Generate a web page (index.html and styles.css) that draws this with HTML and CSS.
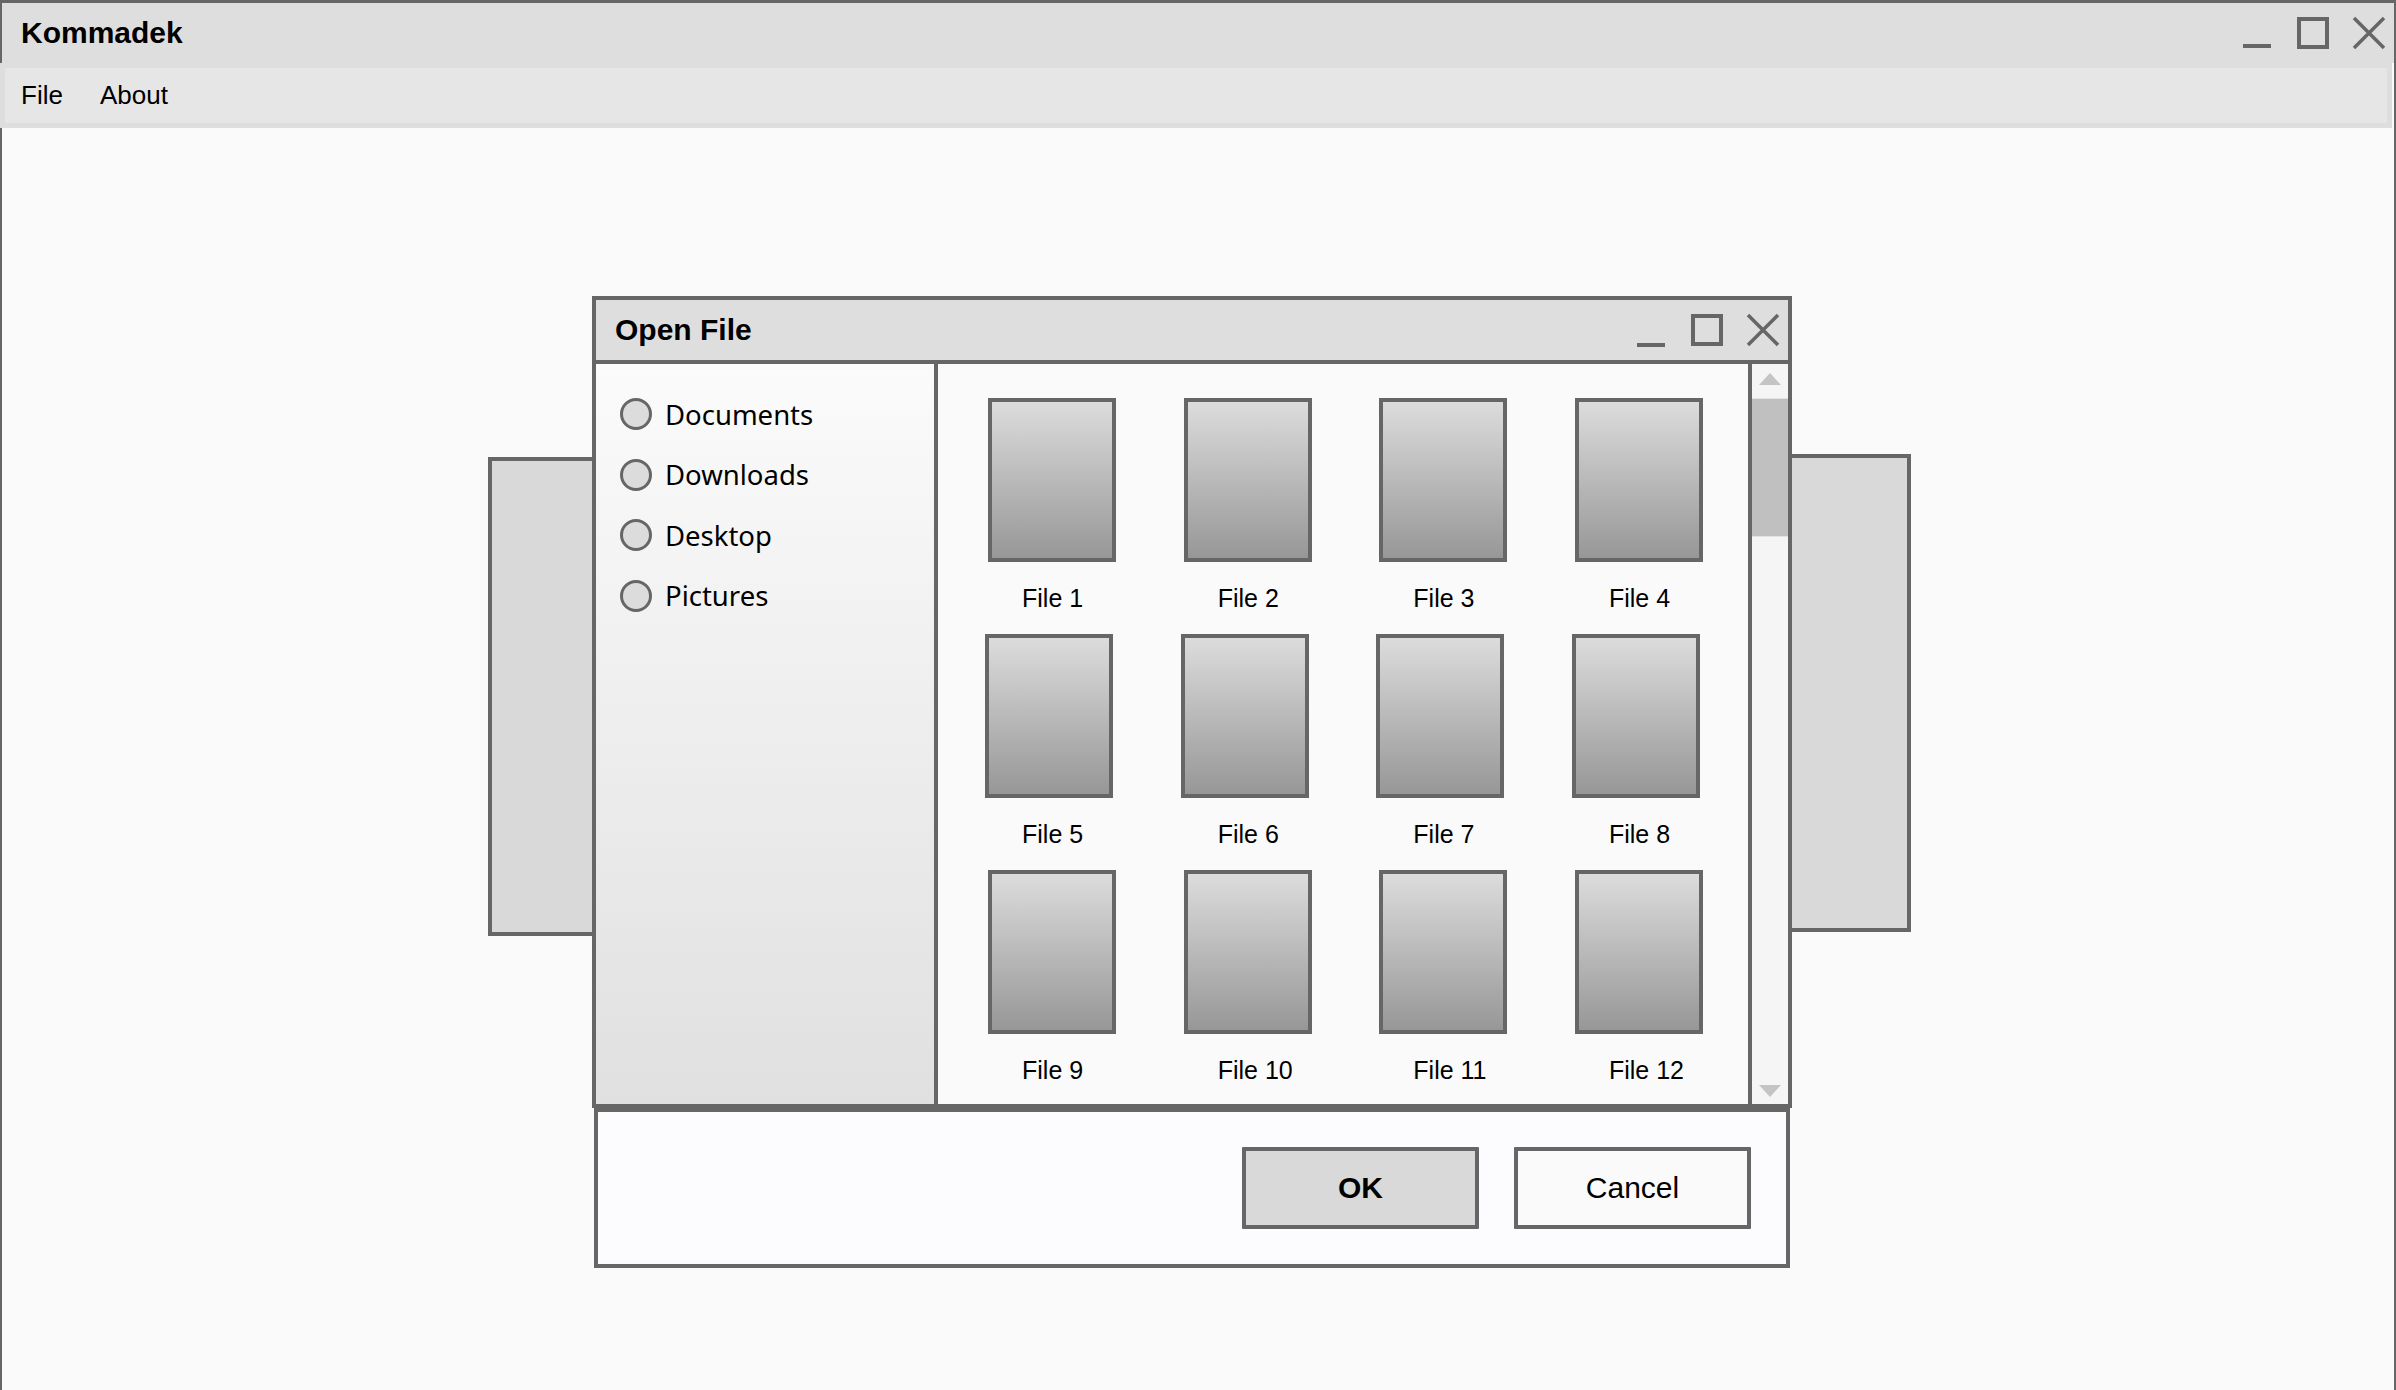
FILE: index.html
```html
<!DOCTYPE html>
<html lang="en">
<head>
<meta charset="utf-8">
<title>Kommadek</title>
<link rel="stylesheet" href="styles.css">
</head>
<body>
<div class="window">
  <div class="titlebar">
    <span class="app-title">Kommadek</span>
    <svg class="controls" width="144" height="36" viewBox="0 0 144 36">
      <rect x="0" y="29" width="28" height="4" fill="#666"/>
      <rect x="56" y="4" width="28" height="28" fill="none" stroke="#666" stroke-width="4"/>
      <path d="M111 3 L141 33 M141 3 L111 33" stroke="#666" stroke-width="3.5" fill="none"/>
    </svg>
  </div>
  <div class="menubar">
    <span class="menu-item">File</span>
    <span class="menu-item">About</span>
  </div>
  <div class="desktop">
    <div class="side-panel side-left"></div>
    <div class="side-panel side-right"></div>
    <div class="dialog">
      <div class="dialog-window">
        <div class="dialog-titlebar">
          <span class="dialog-title">Open File</span>
          <svg class="controls" width="144" height="36" viewBox="0 0 144 36">
            <rect x="0" y="31" width="28" height="4" fill="#666"/>
            <rect x="56" y="4" width="28" height="28" fill="none" stroke="#666" stroke-width="4"/>
            <path d="M111 3 L141 33 M141 3 L111 33" stroke="#666" stroke-width="3.5" fill="none"/>
          </svg>
        </div>
        <div class="dialog-body">
          <div class="sidebar">
            <div class="place"><span class="radio"></span>Documents</div>
            <div class="place"><span class="radio"></span>Downloads</div>
            <div class="place"><span class="radio"></span>Desktop</div>
            <div class="place"><span class="radio"></span>Pictures</div>
          </div>
          <div class="files">
            <div class="file"><div class="file-icon"></div><div class="file-name">File 1</div></div>
            <div class="file"><div class="file-icon"></div><div class="file-name">File 2</div></div>
            <div class="file"><div class="file-icon"></div><div class="file-name">File 3</div></div>
            <div class="file"><div class="file-icon"></div><div class="file-name">File 4</div></div>
            <div class="file row2"><div class="file-icon"></div><div class="file-name">File 5</div></div>
            <div class="file row2"><div class="file-icon"></div><div class="file-name">File 6</div></div>
            <div class="file row2"><div class="file-icon"></div><div class="file-name">File 7</div></div>
            <div class="file row2"><div class="file-icon"></div><div class="file-name">File 8</div></div>
            <div class="file"><div class="file-icon"></div><div class="file-name">File 9</div></div>
            <div class="file"><div class="file-icon"></div><div class="file-name">File 10</div></div>
            <div class="file"><div class="file-icon"></div><div class="file-name">File 11</div></div>
            <div class="file"><div class="file-icon"></div><div class="file-name">File 12</div></div>
          </div>
          <div class="scrollbar">
            <div class="scroll-btn scroll-up"><span class="arrow-up"></span></div>
            <div class="track"><div class="thumb"></div></div>
            <div class="scroll-btn scroll-down"><span class="arrow-down"></span></div>
          </div>
        </div>
      </div>
      <div class="dialog-actions">
        <button class="btn btn-ok">OK</button>
        <button class="btn">Cancel</button>
      </div>
    </div>
  </div>
</div>
</body>
</html>
```

FILE: styles.css
```css
html, body {
  margin: 0;
  padding: 0;
  background: #fafafa;
  overflow: hidden;
}

body {
  font-family: "Liberation Sans", Arial, sans-serif;
  color: #000;
}

.window {
  width: 2396px;
  height: 1390px;
  box-sizing: border-box;
  border-style: solid;
  border-color: #666;
  border-width: 3px 2px 0 2px;
  background: #fafafa;
  display: flex;
  flex-direction: column;
}

.titlebar {
  height: 60px;
  flex: none;
  background: #dedede;
  display: flex;
  align-items: center;
  justify-content: space-between;
  padding: 0 7px 0 19px;
}

.app-title {
  font-weight: bold;
  font-size: 30px;
}

.controls {
  display: block;
  flex: none;
}

.menubar {
  flex: none;
  height: 65px;
  box-sizing: border-box;
  margin: 0 2px 0 -2px;
  border: 5px solid #dedede;
  background: #e6e6e6;
  display: flex;
  align-items: center;
  padding-left: 16px;
  gap: 37px;
  font-size: 26px;
}

.desktop {
  flex: 1;
  position: relative;
}

.side-panel {
  position: absolute;
  box-sizing: border-box;
  background: #d9d9d9;
  border: 4px solid #666;
}

.side-left {
  left: 486px;
  top: 329px;
  width: 130px;
  height: 479px;
}

.side-right {
  left: 1770px;
  top: 326px;
  width: 139px;
  height: 478px;
}

.dialog {
  position: absolute;
  left: 590px;
  top: 168px;
  width: 1200px;
  display: flex;
  flex-direction: column;
}

.dialog-window {
  border: 4px solid #666;
  background: #fafafa;
}

.dialog-titlebar {
  height: 60px;
  background: #dedede;
  border-bottom: 4px solid #666;
  display: flex;
  align-items: center;
  justify-content: space-between;
  padding: 0 7px 0 19px;
}

.dialog-title {
  font-weight: bold;
  font-size: 30px;
}

.dialog-body {
  display: flex;
  height: 740px;
}

.sidebar {
  width: 342px;
  flex: none;
  box-sizing: border-box;
  border-right: 4px solid #666;
  background: linear-gradient(#fbfbfc, #e0e0e0);
  padding: 20px 0 0 24px;
}

.place {
  height: 60.5px;
  display: flex;
  align-items: center;
  font-family: "Noto Sans", "Open Sans", sans-serif;
  font-size: 27.5px;
}

.radio {
  width: 32px;
  height: 32px;
  box-sizing: border-box;
  border-radius: 50%;
  border: 3.5px solid #666;
  background: #dcdcdc;
  margin-right: 13px;
  flex: none;
}

.files {
  width: 810px;
  flex: none;
  box-sizing: border-box;
  padding: 34px 0 0 50px;
  display: grid;
  grid-template-columns: repeat(4, 128px);
  column-gap: 67.67px;
  row-gap: 21px;
  align-content: start;
  background: #fafafa;
}

.file-icon {
  width: 128px;
  height: 164px;
  box-sizing: border-box;
  border: 4px solid #666;
  background: linear-gradient(#dcdcdc, #979797);
}

.row2 .file-icon {
  margin-left: -3px;
}

.file-name {
  margin-top: 21px;
  padding-left: 34px;
  font-size: 25px;
  line-height: 30px;
  white-space: nowrap;
}

.scrollbar {
  width: 40px;
  flex: none;
  box-sizing: border-box;
  border-left: 4px solid #666;
  background: #f5f5f5;
  display: flex;
  flex-direction: column;
}

.scroll-btn {
  height: 34px;
  flex: none;
  display: flex;
  justify-content: center;
  box-sizing: border-box;
}

.scroll-up {
  align-items: flex-start;
  padding-top: 9px;
}

.scroll-down {
  align-items: flex-end;
  padding-bottom: 7px;
}

.arrow-up {
  width: 0;
  height: 0;
  border-left: 11px solid transparent;
  border-right: 11px solid transparent;
  border-bottom: 12px solid #c4c4c4;
}

.arrow-down {
  width: 0;
  height: 0;
  border-left: 11px solid transparent;
  border-right: 11px solid transparent;
  border-top: 12px solid #c4c4c4;
}

.track {
  flex: 1;
}

.thumb {
  height: 139px;
  background: #c0c0c0;
  border-top: 1px solid #e2e2e2;
  border-bottom: 1px solid #e2e2e2;
  box-sizing: border-box;
}

.dialog-actions {
  margin: 0 2px;
  height: 160px;
  box-sizing: border-box;
  border: 4px solid #666;
  background: #fcfcfe;
  display: flex;
  align-items: center;
  justify-content: flex-end;
  padding-right: 35px;
  gap: 35px;
}

.btn {
  width: 237px;
  height: 82px;
  box-sizing: border-box;
  border: 4px solid #666;
  border-radius: 1px;
  background: #fafafa;
  font-family: "Liberation Sans", Arial, sans-serif;
  font-size: 30px;
  color: #000;
  padding: 0;
  margin: 0;
}

.btn-ok {
  background: #d9d9d9;
  font-weight: bold;
}
```
